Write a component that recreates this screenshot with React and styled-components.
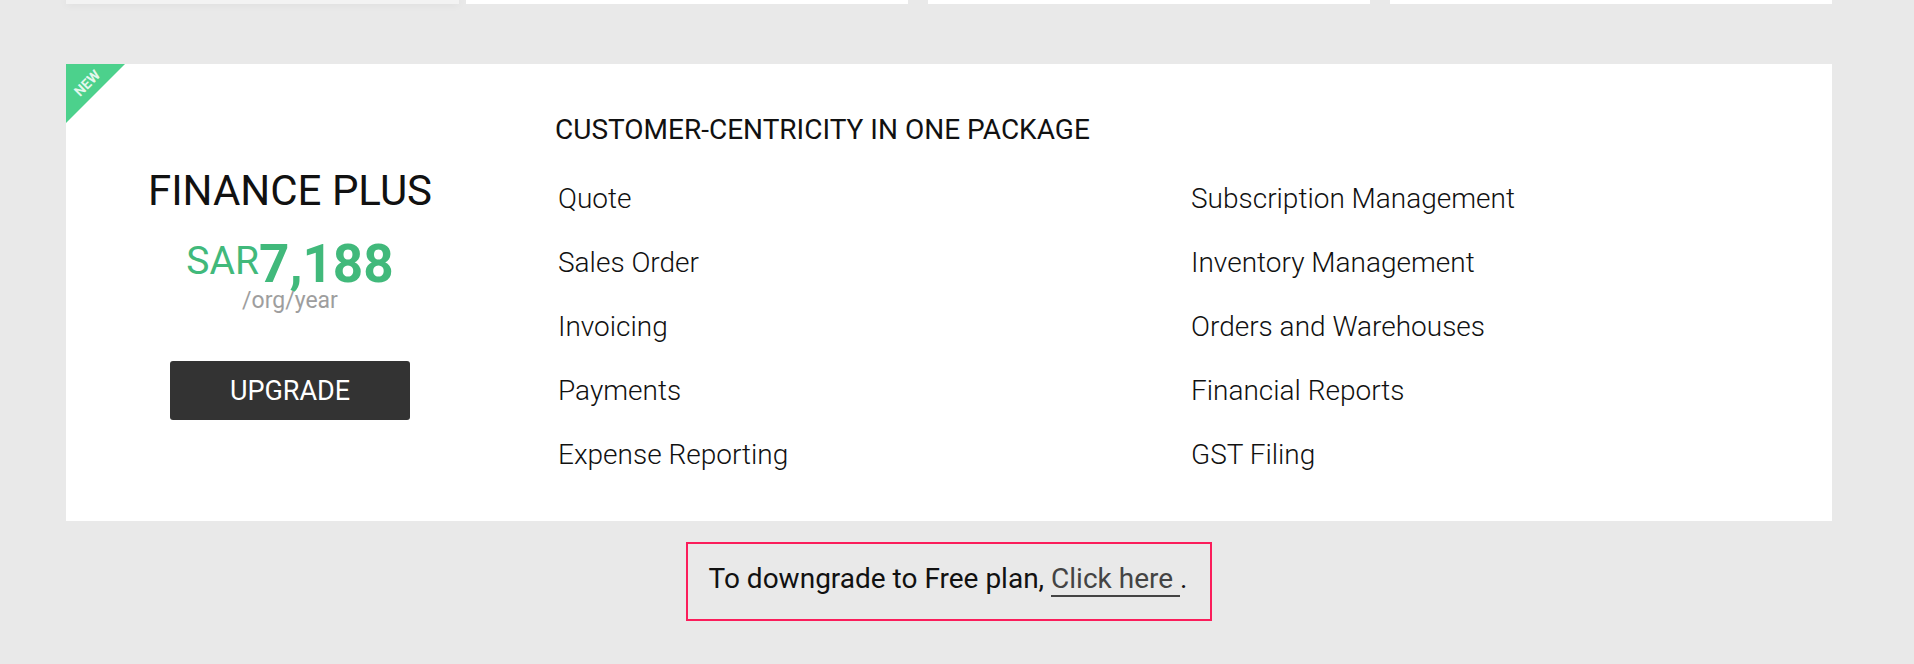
import React from "react";
import styled, { createGlobalStyle } from "styled-components";

const GlobalStyle = createGlobalStyle`
  html, body {
    margin: 0;
    padding: 0;
    background: #e9e9e9;
    font-family: Roboto, "Liberation Sans", Arial, sans-serif;
    color: #111;
  }
`;

const Page = styled.div`
  width: 1766px;
  margin-left: 66px;
  padding-bottom: 43px;
`;

const TopRow = styled.div`
  display: flex;
  height: 4px;
`;

const TopCard = styled.div`
  height: 4px;
  width: ${props => props.w}px;
  margin-right: ${props => props.gap}px;
  background: ${props => (props.faded ? "#f3f3f3" : "#fff")};
  box-shadow: ${props => (props.faded ? "0 0 8px rgba(0,0,0,0.08)" : "none")};
`;

const PlanCard = styled.div`
  position: relative;
  margin-top: 60px;
  height: 457px;
  background: #fff;
  display: grid;
  grid-template-columns: 448px 1fr;
`;

const Badge = styled.div`
  position: absolute;
  top: 0;
  left: 0;
  width: 59px;
  height: 59px;
  background: #4cd18c;
  clip-path: polygon(0 0, 100% 0, 0 100%);

  & span {
    position: absolute;
    top: 12px;
    left: 0;
    width: 42px;
    text-align: center;
    transform: rotate(-45deg);
    color: rgba(255, 255, 255, 0.85);
    font-size: 14px;
    line-height: 14px;
    font-weight: 700;
  }
`;

const PriceColumn = styled.div`
  display: flex;
  flex-direction: column;
  align-items: center;
  padding-top: 106px;
`;

const PlanName = styled.h2`
  margin: 0;
  font-size: 42px;
  line-height: 42px;
  font-weight: 400;
  color: #111;
`;

const PriceRow = styled.div`
  display: flex;
  align-items: flex-start;
  margin-top: 26px;
  color: #41b97b;
`;

const Currency = styled.span`
  margin-top: 4px;
  font-size: 39px;
  line-height: 39px;
  font-weight: 400;
`;

const Amount = styled.span`
  font-size: 53px;
  line-height: 53px;
  font-weight: 700;
`;

const Period = styled.div`
  margin-top: -2px;
  font-size: 23px;
  line-height: 23px;
  color: #9e9e9e;
`;

const UpgradeButton = styled.button`
  margin-top: 49px;
  width: 240px;
  height: 59px;
  border: none;
  border-radius: 3px;
  background: #333;
  color: #fff;
  font-family: inherit;
  font-size: 27px;
  font-weight: 400;
  cursor: pointer;
`;

const Features = styled.div`
  padding-top: 49px;
  padding-left: 41px;
`;

const FeaturesTitle = styled.h3`
  margin: 0;
  font-size: 28px;
  line-height: 34px;
  font-weight: 400;
  color: #111;
`;

const FeatureList = styled.ul`
  list-style: none;
  margin: 20px 0 0;
  padding: 0 0 0 3px;
  display: grid;
  grid-template-columns: 633px 633px;
  grid-template-rows: repeat(5, 64px);
  grid-auto-flow: column;
`;

const Feature = styled.li`
  font-size: 28px;
  line-height: 64px;
  font-weight: 300;
  color: #111;
`;

const Downgrade = styled.div`
  width: fit-content;
  margin: 21px auto 0;
  border: 2px solid #fb1d5b;
  padding: 15px 23px 20px 21px;
  font-size: 28px;
  line-height: 40px;
  color: #111;
`;

const Link = styled.a`
  color: #444;
  text-decoration: none;
  border-bottom: 2px solid #444;
  cursor: pointer;
`;

const leftFeatures = [
  "Quote",
  "Sales Order",
  "Invoicing",
  "Payments",
  "Expense Reporting"
];

const rightFeatures = [
  "Subscription Management",
  "Inventory Management",
  "Orders and Warehouses",
  "Financial Reports",
  "GST Filing"
];

export default function App() {
  return (
    <>
      <GlobalStyle />
      <Page>
        <TopRow>
          <TopCard faded w={393} gap={7} />
          <TopCard w={442} gap={20} />
          <TopCard w={442} gap={20} />
          <TopCard w={442} gap={0} />
        </TopRow>

        <PlanCard>
          <Badge>
            <span>NEW</span>
          </Badge>

          <PriceColumn>
            <PlanName>FINANCE PLUS</PlanName>
            <PriceRow>
              <Currency>SAR</Currency>
              <Amount>7,188</Amount>
            </PriceRow>
            <Period>/org/year</Period>
            <UpgradeButton>UPGRADE</UpgradeButton>
          </PriceColumn>

          <Features>
            <FeaturesTitle>CUSTOMER-CENTRICITY IN ONE PACKAGE</FeaturesTitle>
            <FeatureList>
              {leftFeatures.concat(rightFeatures).map((item, index) => (
                <Feature key={index}>{item}</Feature>
              ))}
            </FeatureList>
          </Features>
        </PlanCard>

        <Downgrade>
          To downgrade to Free plan, <Link>Click here </Link>.
        </Downgrade>
      </Page>
    </>
  );
}
